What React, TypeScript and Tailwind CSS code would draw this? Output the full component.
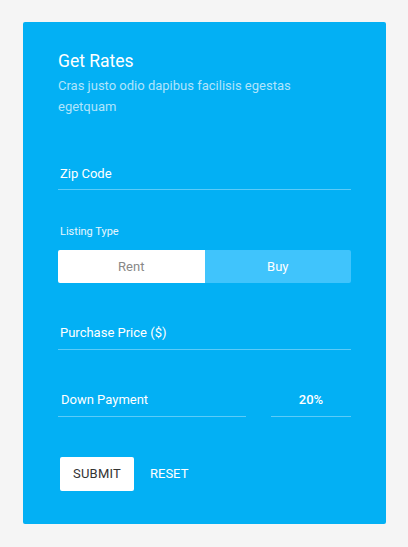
import { useState } from "react";

export default function App() {
  const [listing, setListing] = useState<"rent" | "buy">("buy");

  return (
    <div
      className="min-h-[547px] w-full bg-[#f5f5f5] pt-[22px] pl-[23px]"
      style={{ fontFamily: "Roboto, 'Noto Sans', sans-serif" }}
    >
      <div className="w-[363px] h-[502px] rounded-[2px] bg-[#03b0f4] px-[35px] pt-[27px]">
        <h2 className="text-[17.5px] leading-[24px] text-white">Get Rates</h2>
        <p className="mt-[2px] text-[13px] leading-[21px] text-[#b0e4fc]">
          Cras justo odio dapibus facilisis egestas egetquam
        </p>

        <div className="mt-[47px] border-b border-[#5ccbf8] pb-[5px] pl-[2px] text-[13px] leading-[20px] text-white">
          Zip Code
        </div>

        <div className="mt-[34px] pl-[2px] text-[11px] leading-[16px] text-[#e6f6fe]">
          Listing Type
        </div>
        <div className="mt-[10px] flex h-[33px] overflow-hidden rounded-[2px]">
          <button
            onClick={() => setListing("rent")}
            className={
              listing === "rent"
                ? "flex-1 bg-[#40c4fc] text-[13px] text-white"
                : "flex-1 bg-white text-[13px] text-[#888888]"
            }
          >
            Rent
          </button>
          <button
            onClick={() => setListing("buy")}
            className={
              listing === "buy"
                ? "flex-1 bg-[#40c4fc] text-[13px] text-white"
                : "flex-1 bg-white text-[13px] text-[#888888]"
            }
          >
            Buy
          </button>
        </div>

        <div className="mt-[40px] border-b border-[#5ccbf8] pb-[6px] pl-[2px] text-[13px] leading-[20px] text-white">
          Purchase Price ($)
        </div>

        <div className="mt-[40px] flex gap-[25px]">
          <div className="flex-1 border-b border-[#5ccbf8] pb-[6px] pl-[3px] text-[13px] leading-[20px] text-white">
            Down Payment
          </div>
          <div className="w-[80px] border-b border-[#5ccbf8] pb-[6px] text-center text-[13px] font-medium leading-[20px] text-white">
            20%
          </div>
        </div>

        <div className="mt-[40px] flex items-center pl-[2px]">
          <button className="h-[34px] w-[74px] rounded-[2px] bg-white text-[13px] tracking-[0.2px] text-[#333333]">
            SUBMIT
          </button>
          <button className="ml-[4px] h-[34px] px-[12px] text-[13px] text-white">
            RESET
          </button>
        </div>
      </div>
    </div>
  );
}
